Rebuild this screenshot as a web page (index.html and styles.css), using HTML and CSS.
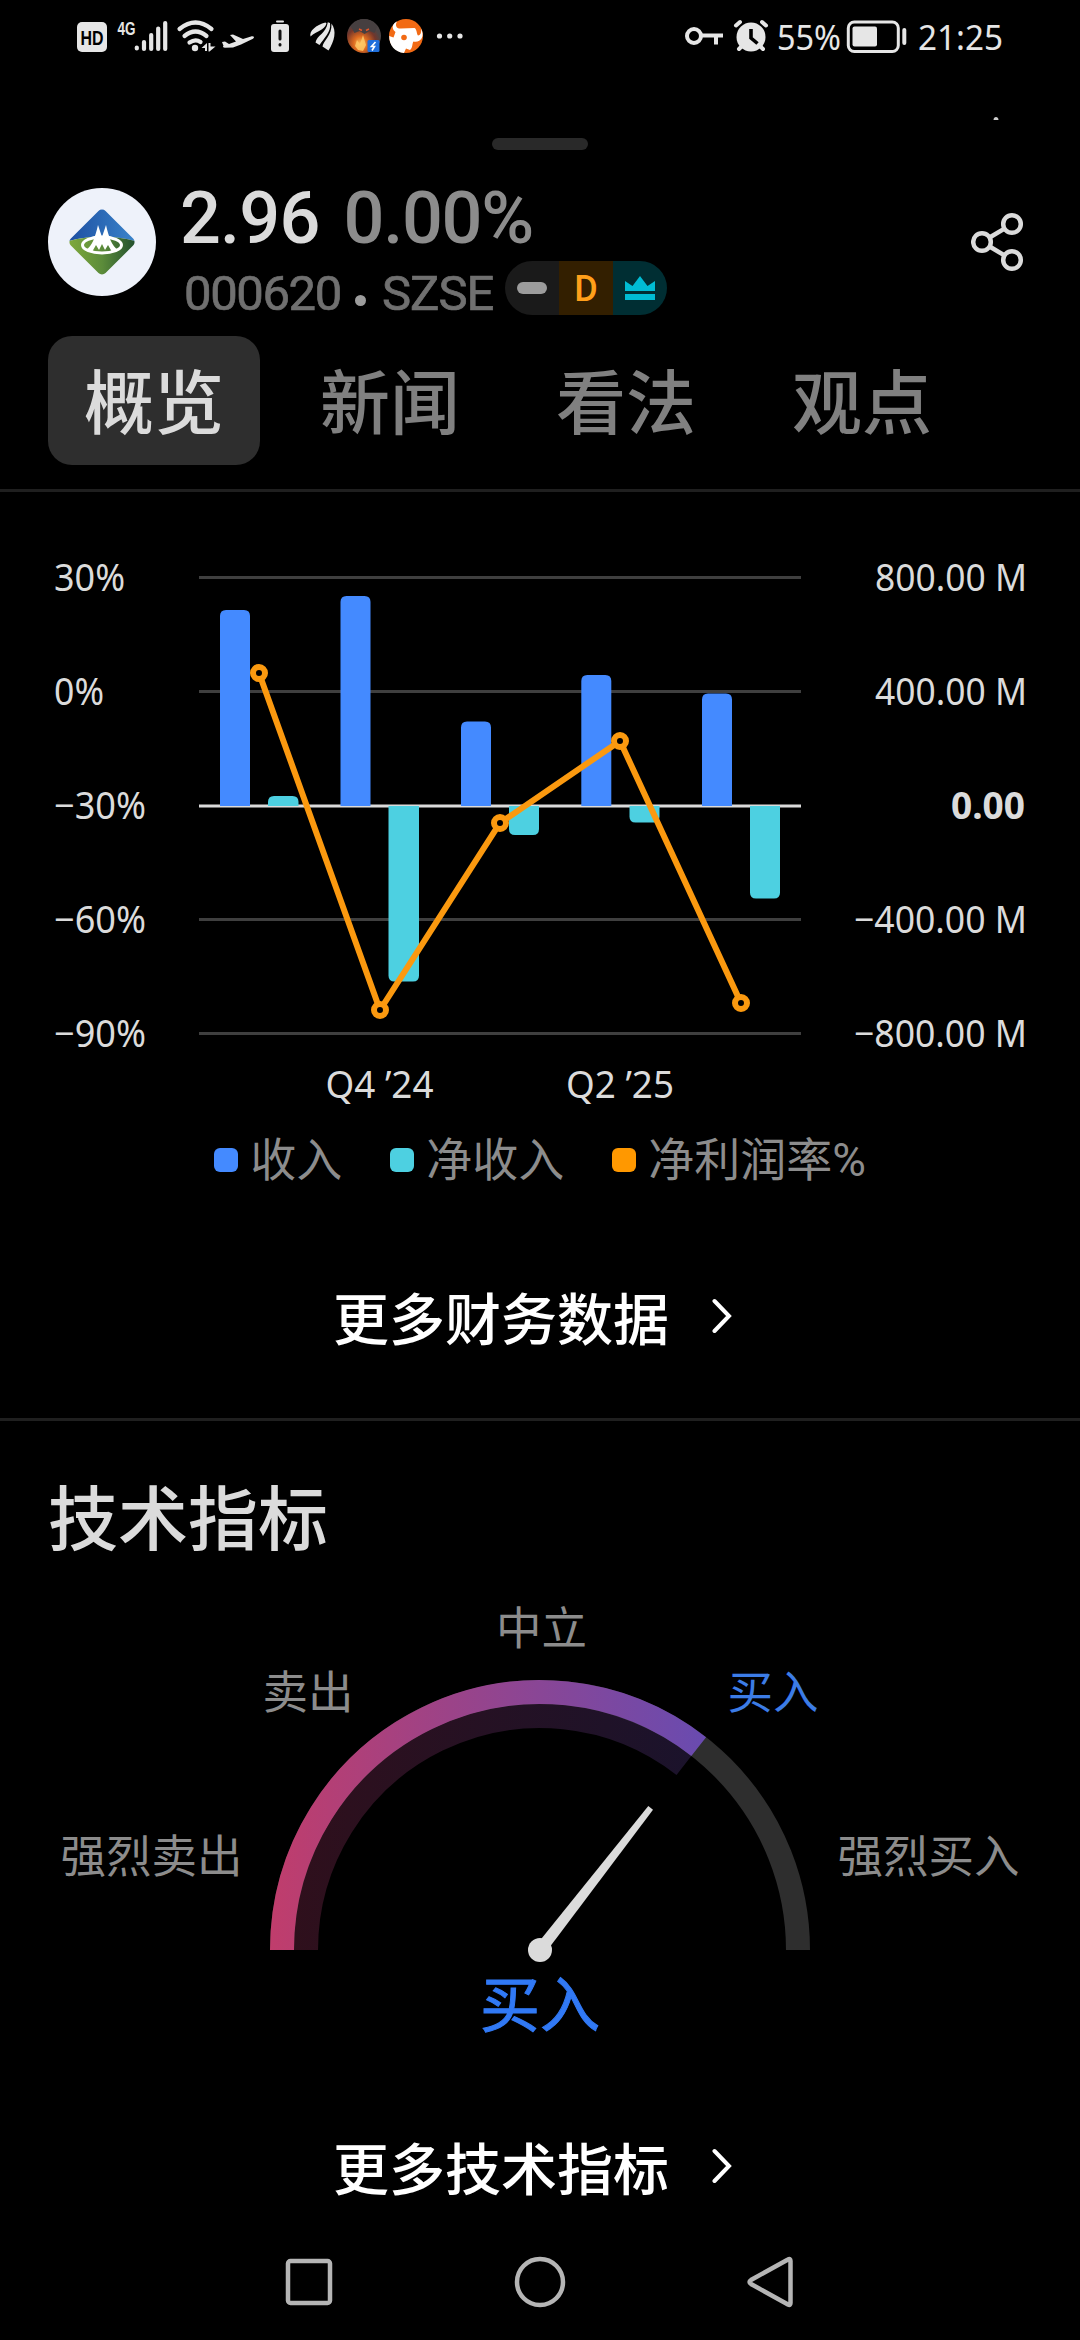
FILE: index.html
```html
<!DOCTYPE html>
<html lang="zh-CN">
<head>
<meta charset="utf-8">
<title>000620 SZSE</title>
<link rel="stylesheet" href="styles.css">
</head>
<body>
<div class="screen">
  <header class="status">
    <svg class="status-left" viewBox="0 0 420 70" width="420" height="70">
      <rect x="17" y="22" width="30" height="30" rx="5" fill="#e6e6e6"/>
      <text class="hd" x="20.5" y="44.5" textLength="23" lengthAdjust="spacingAndGlyphs">HD</text>
      <text class="net" x="57.5" y="34.5" textLength="18" lengthAdjust="spacingAndGlyphs">4G</text>
      <g stroke="#e6e6e6" stroke-width="4.2" stroke-linecap="round" fill="none">
        <path d="M76.8 47.500v1M84 42v7M91.200 35v14M98.200 28.500v20.500M105.200 23v26"/>
        <path d="M119.500 29Q135.500 16 151.500 29M124.500 36Q135.500 27 146.500 36M129.500 42.500Q135.500 38.500 140.500 42"/>
      </g>
      <circle cx="135" cy="48" r="3.200" fill="#e6e6e6"/>
      <path fill="#e6e6e6" d="M141.500 48l5.500-5v8h-2v-3zM148.500 43h2v3.500h5l-6 5h-1z"/>
      <path fill="#e6e6e6" d="M162 42l3-.5 4 2.500 7-2.500-6-6.500 3-.6 10 4.600 8-2.500c3-.7 4 1 2 2.200l-12 5.800-8 3-8 .2c-2 0-2.500-1.500-1.500-2z"/>
      <rect x="216" y="20.500" width="8" height="2" rx="1" fill="#e6e6e6"/>
      <rect x="211" y="24" width="18" height="28" rx="3" fill="#e6e6e6"/>
      <path stroke="#111" stroke-width="3" stroke-linecap="round" d="M220 31v8M220 44.500v.4"/>
      <path fill="#e6e6e6" d="M250.500 36.500C249 31 256 25 265.500 22.500L266.500 23.500C264 31 257 30.500 250.500 36.500zM255.500 42.500C257 35 266 34 267.800 22.300L270 23C271.500 32 264 38 259.500 45zM262.500 46.500C263.500 40 272 36 271.500 23.500C277 31 274.500 41 268.500 50.500z"/>
      <radialGradient id="fire" cx=".4" cy=".72" r=".6"><stop offset="0" stop-color="#ffc05a"/><stop offset=".35" stop-color="#dc6a20"/><stop offset=".75" stop-color="#74362a"/><stop offset="1" stop-color="#4c4444"/></radialGradient>
      <circle cx="304" cy="36" r="17" fill="url(#fire)"/>
      <path d="M290.500 26q13.500-14 27 0l-3 7-5-2-5 3-5-3-5 2z" fill="#463f40"/>
      <path d="M299 29l3 1.500M309 29l-3 1.500" stroke="#e0562a" stroke-width="1.500"/>
      <path d="M295 46l2-6 3 4 3-9 3 10-3 6-5-1z" fill="#ffc966" opacity=".85"/>
      <rect x="307.500" y="40" width="12" height="12" rx="1.500" fill="#1f6fdc"/>
      <path d="M315.500 42l-4 4.500h3l-2.500 4" stroke="#fff" stroke-width="1.600" fill="none"/>
      <circle cx="346" cy="36" r="17" fill="#f26a14"/>
      <path fill="#fff" d="M337 21.500C334.500 26 337 29 341 28.500L354.500 28C357 29 356.500 34 358 35.500C361 35 361.500 32 361 28.500C365.500 37 360 43 353.500 41.500C352 43 353 48 350 50L346 48.500L344 52.900C335 52.500 329 45 329.200 36L333.500 37.500L335.500 32C330.500 28 333 23 337 21.500z"/>
      <circle cx="344" cy="37.500" r="2.800" fill="#f26a14"/>
      <g fill="#e6e6e6"><circle cx="379.500" cy="36" r="2.600"/><circle cx="389.700" cy="36" r="2.600"/><circle cx="400" cy="36" r="2.600"/></g>
    </svg>
    <svg class="status-right" viewBox="0 0 420 130" width="420" height="130">
      <g stroke="#e6e6e6" fill="none" stroke-width="4">
        <circle cx="34" cy="36" r="7"/>
        <path d="M42 35.500H63M56 35v9.500" />
        <path stroke-linecap="round" d="M76 25.500l4-3.500M106 25.500l-4-3.500M79 49l3-3M103 49l-3-3"/>
      </g>
      <circle cx="91" cy="37" r="14.500" fill="#e6e6e6"/>
      <path d="M91 29v9l6.500 5.500" fill="none" stroke="#000" stroke-width="3.600"/>
      <text class="clock" x="117" y="50" textLength="64" lengthAdjust="spacingAndGlyphs">55%</text>
      <rect x="188.300" y="22" width="50" height="29.500" rx="6" fill="none" stroke="#e6e6e6" stroke-width="3"/>
      <rect x="192.500" y="26.500" width="24.500" height="20" rx="2" fill="#e6e6e6"/>
      <rect x="242.300" y="28" width="4" height="17" rx="2" fill="#e6e6e6"/>
      <text class="clock" x="258" y="50" textLength="85" lengthAdjust="spacingAndGlyphs">21:25</text>
      <path fill="#ccc" d="M333.500 120c0-4 5-4 5 0z"/>
    </svg>
  </header>
  <div class="grip-row"><span class="grip"></span></div>

  <section class="quote">
    <svg class="logo" viewBox="0 0 108 108" width="108" height="108">
      <defs>
        <clipPath id="dm"><rect x="29.500" y="29.500" width="49" height="49" rx="5" transform="rotate(45 54 54)"/></clipPath>
        <linearGradient id="bl"><stop offset="0" stop-color="#1c4da0"/><stop offset="1" stop-color="#3b86cc"/></linearGradient>
        <linearGradient id="gr"><stop offset="0" stop-color="#82ab3c"/><stop offset=".5" stop-color="#5c8c3a"/><stop offset="1" stop-color="#1c4a2c"/></linearGradient>
      </defs>
      <circle cx="54" cy="54" r="54" fill="#eef2fa"/>
      <g clip-path="url(#dm)">
        <path d="M18 18h72v36Q54 43 18 54z" fill="url(#bl)"/>
        <path d="M18 54Q54 43 90 54v36H18z" fill="url(#gr)"/>
      </g>
      <ellipse cx="54" cy="57" rx="19.500" ry="8" fill="none" stroke="#fff" stroke-width="3"/>
      <path fill="#fff" d="M38 62c6-4 9-12 12-25l4 12 4-12c3 13 6 21 12 25l-6 2-4-7-3 5-3-6-3 6-3-5-4 7z"/>
    </svg>
    <div class="quote-main">
      <div class="price-row"><span class="price">2.96</span><span class="change">0.00%</span></div>
      <div class="symbol-row">
        <span class="code">000620</span><i class="sep"></i><span class="market">SZSE</span>
        <span class="badges">
          <span class="badge closed"><i></i></span>
          <span class="badge delayed">D</span>
          <span class="badge crown"><svg viewBox="0 0 30 24" width="30" height="24"><path fill="#00bcd4" d="M0 5l7.500 5L15 0l7.500 10L30 5v10H0zM0 18h30v6H0z"/></svg></span>
        </span>
      </div>
    </div>
    <svg class="share" viewBox="0 0 54 60" width="54" height="60" fill="none" stroke="#dbdbdb" stroke-width="4.500">
      <circle cx="11" cy="30" r="8.800"/><circle cx="41" cy="12" r="8.800"/><circle cx="41" cy="48" r="8.800"/><path d="M19 25.200l14.500-8.600M19 34.800l14.500 8.600"/>
    </svg>
  </section>

  <nav class="tabs">
    <span class="tab active">概览</span><span class="tab">新闻</span><span class="tab">看法</span><span class="tab">观点</span>
  </nav>

  <section class="finance">
    <svg class="chart" viewBox="0 492 1080 628" width="1080" height="628">
      <g stroke="#3f3f3f" stroke-width="3"><path d="M199 577.500H801M199 691.500H801M199 919.500H801M199 1033.500H801"/></g>
      <path d="M199 806H801" stroke="#dbdbdb" stroke-width="3"/>
      <g fill="#448aff">
        <path d="M220 806V616q0-6 6-6h18q6 0 6 6V806z"/>
        <path d="M340.500 806V602q0-6 6-6h18q6 0 6 6V806z"/>
        <path d="M461 806V727.500q0-6 6-6h18q6 0 6 6V806z"/>
        <path d="M581.300 806V681q0-6 6-6h18q6 0 6 6V806z"/>
        <path d="M702 806V699.500q0-6 6-6h18q6 0 6 6V806z"/>
      </g>
      <g fill="#4dd0e1">
        <path d="M268 806V802q0-6 6-6h18.500q6 0 6 6V806z"/>
        <path d="M388.500 806V975.500q0 6 6 6h18.500q6 0 6-6V806z"/>
        <path d="M509 806V829q0 6 6 6h18q6 0 6-6V806z"/>
        <path d="M629.500 806V816.500q0 6 6 6h18q6 0 6-6V806z"/>
        <path d="M750 806V892.500q0 6 6 6h18q6 0 6-6V806z"/>
      </g>
      <g stroke="#fb990f" stroke-width="6">
        <path fill="none" d="M259 673L380 1010L500 823L620 741L741 1003"/>
        <g fill="#000"><circle cx="259" cy="673" r="6"/><circle cx="380" cy="1010" r="6"/><circle cx="500" cy="823" r="6"/><circle cx="620" cy="741" r="6"/><circle cx="741" cy="1003" r="6"/></g>
      </g>
      <g class="axis">
        <text x="54" y="590.500" textLength="71" lengthAdjust="spacingAndGlyphs">30%</text>
        <text x="54" y="704.500" textLength="50" lengthAdjust="spacingAndGlyphs">0%</text>
        <text x="54" y="818.500" textLength="92" lengthAdjust="spacingAndGlyphs">−30%</text>
        <text x="54" y="932.500" textLength="92" lengthAdjust="spacingAndGlyphs">−60%</text>
        <text x="54" y="1046.500" textLength="92" lengthAdjust="spacingAndGlyphs">−90%</text>
        <text x="875" y="590.500" textLength="152" lengthAdjust="spacingAndGlyphs">800.00 M</text>
        <text x="875" y="704.500" textLength="152" lengthAdjust="spacingAndGlyphs">400.00 M</text>
        <text x="951" y="818.500" textLength="74" lengthAdjust="spacingAndGlyphs" class="zero">0.00</text>
        <text x="854" y="932.500" textLength="173" lengthAdjust="spacingAndGlyphs">−400.00 M</text>
        <text x="854" y="1046.500" textLength="173" lengthAdjust="spacingAndGlyphs">−800.00 M</text>
        <text x="325.500" y="1098" textLength="108" lengthAdjust="spacingAndGlyphs">Q4 ’24</text>
        <text x="566" y="1098" textLength="108" lengthAdjust="spacingAndGlyphs">Q2 ’25</text>
      </g>
    </svg>
    <div class="legend">
      <span class="key revenue">收入</span><span class="key income">净收入</span><span class="key margin">净利润率%</span>
    </div>
    <div class="more">更多财务数据<svg viewBox="0 0 20 36" width="20" height="36"><path d="M2.500 3L17 18L2.500 33" fill="none" stroke="#fff" stroke-width="4" stroke-linecap="round"/></svg></div>
  </section>

  <section class="technicals">
    <h2>技术指标</h2>
    <svg class="gauge" viewBox="0 1590 1080 470" width="1080" height="470">
      <defs><linearGradient id="g" gradientUnits="userSpaceOnUse" x1="270" y1="0" x2="706" y2="0"><stop offset="0" stop-color="#c03d6c"/><stop offset=".62" stop-color="#894696"/><stop offset="1" stop-color="#694bb0"/></linearGradient></defs>
      <path d="M282 1950A258 258 0 0 1 798 1950" fill="none" stroke="#2e2e2e" stroke-width="24"/>
      <path d="M282 1950A258 258 0 0 1 698.700 1746.600" fill="none" stroke="url(#g)" stroke-width="24"/>
      <path d="M306 1950A234 234 0 0 1 683.900 1765.500" fill="none" stroke="url(#g)" stroke-width="24" opacity=".25"/>
      <path d="M535.300 1946.300L648.300 1806L653 1809.700L544.700 1953.700z" fill="#dbdbdb"/>
      <circle cx="540" cy="1950" r="12" fill="#dbdbdb"/>
      <g class="rating">
        <text x="541.500" y="1645" text-anchor="middle">中立</text>
        <text x="308" y="1708.500" text-anchor="middle">卖出</text>
        <text x="151.500" y="1872.500" text-anchor="middle">强烈卖出</text>
        <text x="773" y="1708.500" text-anchor="middle" class="hot">买入</text>
        <text x="928.500" y="1872.500" text-anchor="middle">强烈买入</text>
        <text x="540" y="2027" text-anchor="middle" class="verdict">买入</text>
      </g>
    </svg>
    <div class="more">更多技术指标<svg viewBox="0 0 20 36" width="20" height="36"><path d="M2.500 3L17 18L2.500 33" fill="none" stroke="#fff" stroke-width="4" stroke-linecap="round"/></svg></div>
  </section>

  <footer class="navbar">
    <svg viewBox="0 0 52 52" width="52" height="52"><rect x="5" y="5" width="42" height="42" rx="2.500"/></svg>
    <svg viewBox="0 0 52 52" width="52" height="52"><circle cx="26" cy="26" r="23"/></svg>
    <svg viewBox="0 0 52 52" width="52" height="52"><path d="M43 3.500Q45.500 2 45.500 5V47Q45.500 50 43 48.500L6 28Q3 26 6 24z"/></svg>
  </footer>
</div>
</body>
</html>
```
FILE: styles.css
```css
* { box-sizing: border-box; }
body { margin: 0; background: #000; }
.screen {
  width: 1080px; height: 2340px; overflow: hidden;
  display: flex; flex-direction: column;
  background: #000; color: #dbdbdb;
  font-family: Roboto, "Noto Sans CJK SC", sans-serif;
}
.status { height: 138px; flex: none; display: flex; justify-content: space-between; align-items: flex-start; padding-left: 60px; }
.hd { font: 700 21px "Liberation Sans", sans-serif; fill: #000; }
.net { font: 700 19px "Liberation Sans", sans-serif; fill: #e6e6e6; }
.clock { font: 400 35px "Noto Sans", sans-serif; fill: #e6e6e6; }

.grip-row { height: 50px; flex: none; display: flex; justify-content: center; align-items: flex-start; }
.grip { width: 96px; height: 12px; border-radius: 6px; background: #292929; }

.quote { height: 148px; flex: none; display: flex; align-items: flex-start; padding: 0 55px 0 48px; }
.logo { flex: none; }
.quote-main { margin-left: 24px; flex: 1; }
.price-row { height: 73px; display: flex; padding-top: 1px; gap: 24px; font-size: 72px; line-height: 60px; font-weight: 500; }
.price { letter-spacing: -0.8px; }
.change { color: #8c8c8c; letter-spacing: -1.3px; -webkit-text-stroke: 0; }
.symbol-row { height: 54px; display: flex; align-items: center; font-size: 49px; line-height: 54px; color: #707070; padding-left: 4px; }
.code { width: 157px; flex: none; letter-spacing: -1.4px; padding-top: 11px; -webkit-text-stroke: 0.7px #707070; }
.sep { width: 11px; height: 11px; flex: none; border-radius: 50%; background: #9c9c9c; margin: 24px 16px 0 14px; }
.market { width: 123px; flex: none; letter-spacing: -1px; padding-top: 11px; -webkit-text-stroke: 0.7px #707070; }
.badges { display: flex; flex: none; height: 54px; border-radius: 27px; overflow: hidden; }
.badge { width: 54px; height: 54px; display: flex; align-items: center; justify-content: center; font-size: 36px; font-weight: 500; }
.closed { background: #1a1a1a; }
.closed i { width: 30px; height: 12px; border-radius: 6px; background: #9c9c9c; }
.delayed { background: #331f00; color: #ff9f1a; padding-top: 2px; }
.crown { background: #002e33; }
.share { margin: 24px 0 0; flex: none; }

.tabs { height: 156px; flex: none; display: flex; gap: 24px; align-items: flex-start; padding-left: 48px; border-bottom: 3px solid #1f1f1f; }
.tab { width: 212px; height: 129px; border-radius: 24px; text-align: center; font-size: 70px; font-weight: 500; line-height: 139px; color: #808080; }
.tab.active { background: #2e2e2e; color: #dbdbdb; }

.finance { height: 929px; flex: none; display: flex; flex-direction: column; border-bottom: 3px solid #1f1f1f; }
.chart { display: block; flex: none; }
.axis { font: 400 37.500px "Noto Sans", sans-serif; fill: #dbdbdb; }
.zero { font-weight: 700; }
.legend { height: 80px; display: flex; justify-content: center; align-items: center; gap: 48px; font-size: 46px; line-height: 78px; color: #8c8c8c; }
.key { display: flex; align-items: center; gap: 12px; }
.key::before { content: ""; width: 24px; height: 24px; border-radius: 6px; background: #448aff; }
.income::before { background: #4dd0e1; }
.margin::before { background: #ff9800; }
.more { display: flex; align-items: center; gap: 43px; padding-left: 333px; font-size: 56px; line-height: 80px; font-weight: 500; color: #fff; font-family: "Noto Sans CJK SC", sans-serif; }
.finance .more { margin-top: 76px; }

.technicals { height: 799px; flex: none; display: flex; flex-direction: column; }
h2 { margin: 50px 0 0; height: 119px; padding-left: 48px; font-size: 70px; line-height: 100px; font-weight: 500; }
.gauge { flex: none; display: block; }
.rating { font: 400 45.500px "Noto Sans CJK SC", sans-serif; fill: #8c8c8c; }
.rating .hot { fill: #3c7ce6; }
.rating .verdict { font-size: 60px; fill: #3179f5; stroke: #3179f5; stroke-width: 1px; }
.technicals .more { margin-top: 66px; }

.navbar { height: 120px; display: flex; justify-content: space-between; align-items: flex-start; padding: 36px 283px 0 283px; }
.navbar svg { fill: none; stroke: #b5b5b5; stroke-width: 4.500; }
```
